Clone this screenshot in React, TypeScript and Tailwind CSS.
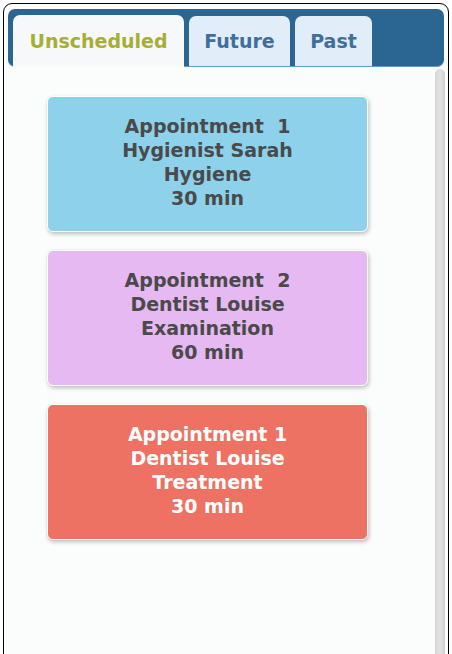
import React from "react";

const cards = [
  { lines: ["Appointment  1", "Hygienist Sarah", "Hygiene", "30 min"], bg: "bg-[#8dd1ea]", fg: "text-[#4a4a4a]" },
  { lines: ["Appointment  2", "Dentist Louise", "Examination", "60 min"], bg: "bg-[#e6b9f2]", fg: "text-[#4a4a4a]" },
  { lines: ["Appointment 1", "Dentist Louise", "Treatment", "30 min"], bg: "bg-[#ee7263]", fg: "text-white" },
];

export default function App() {
  return (
    <div className="w-[452px] h-[654px] bg-white overflow-hidden" style={{ fontFamily: '"DejaVu Sans", "Liberation Sans", sans-serif' }}>
      <div className="ml-[3px] mt-[3px] w-[446px] h-[660px] border border-black rounded-t-[9px] bg-[#fbfcfc] flex flex-col">
        <div className="mx-[4px] mt-[5px] h-[58px] bg-[#2b6592] rounded-[7px] flex items-end px-[5px] gap-[5px] border-b border-[#5f9bd0] relative">
          <div className="w-[171px] bg-[#f6f8fa] rounded-t-[7px] flex items-center justify-center text-[#a7ae35] font-bold text-[19px] -mb-[1px] h-[52px]">Unscheduled</div>
          <div className="w-[101px] h-[50px] bg-[#e1edf9] rounded-t-[7px] flex items-center justify-center text-[#3e6f9d] font-bold text-[19px]">Future</div>
          <div className="w-[77px] h-[50px] bg-[#e1edf9] rounded-t-[7px] flex items-center justify-center text-[#3e6f9d] font-bold text-[19px]">Past</div>
        </div>
        <div className="flex-1 flex relative">
          <div className="flex-1 flex flex-col gap-[18px] pt-[29px] pl-[43px]">
            {cards.map((c, i) => (
              <div key={i} className={`w-[321px] h-[136px] ${c.bg} ${c.fg} rounded-[6px] border border-white shadow-[1px_2px_4px_rgba(0,0,0,0.25)] flex flex-col items-center pt-[17px] font-bold text-[19px] leading-[24px]`}>
                {c.lines.map((l, j) => (
                  <div key={j} className="whitespace-pre">{l}</div>
                ))}
              </div>
            ))}
          </div>
          <div className="w-[10px] mr-[3px] mt-[2px] bg-gradient-to-r from-[#d6d6d6] via-[#e2e2e2] to-[#cfcfcf] rounded-t-[5px]" />
        </div>
      </div>
    </div>
  );
}
